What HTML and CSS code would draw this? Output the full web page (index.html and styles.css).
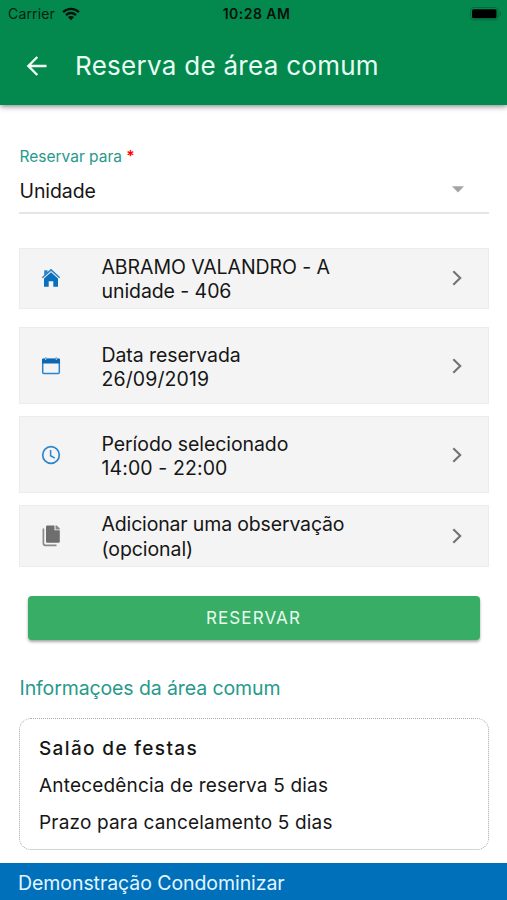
FILE: index.html
```html
<!DOCTYPE html>
<html lang="pt-BR">
<head>
<meta charset="utf-8">
<meta name="viewport" content="width=device-width, initial-scale=1">
<title>Reserva de área comum</title>
<link rel="stylesheet" href="styles.css">
</head>
<body>
<div class="app">
  <header class="header">
    <div class="status">
      <div class="status-left">
        <span class="carrier">Carrier</span>
        <svg class="wifi" width="18" height="14" viewBox="0 0 18 14" fill="none" stroke="#06120b" stroke-width="2.3">
          <path d="M1.1 5.1C5.6.7 12.4.7 16.9 5.1M4 8.1c2.9-2.8 7.1-2.8 10 0"/>
          <path d="M9 13.2 5.9 10.1c1.8-1.6 4.4-1.6 6.2 0z" fill="#06120b" stroke="none"/>
        </svg>
      </div>
      <span class="clock">10:28 AM</span>
      <div class="status-right">
        <svg width="32" height="14" viewBox="0 0 32 14">
          <rect x=".5" y=".5" width="27.5" height="12.5" rx="3" fill="none" stroke="#046b3b"/>
          <rect x="2" y="2.2" width="24.5" height="9" rx="1.5" fill="#000"/>
          <path d="M29.5 4.5c2 .8 2 4 0 4.800z" fill="#046b3b"/>
        </svg>
      </div>
    </div>
    <div class="toolbar">
      <svg class="back" width="22" height="22" viewBox="0 0 22 22" fill="none" stroke="#f1fff7" stroke-width="2.4">
        <path d="M20.500 11H3M11.300 2 2.400 11l8.900 9"/>
      </svg>
      <h1 class="title">Reserva de área comum</h1>
    </div>
  </header>

  <main class="content">
    <div class="field">
      <label class="label">Reservar para <span class="required">*</span></label>
      <div class="select">
        <span class="value">Unidade</span>
        <svg class="caret" width="12" height="7" viewBox="0 0 12 7"><path d="M0 .3h12L6 6.500z"/></svg>
      </div>
    </div>

    <div class="row row-home">
      <svg class="icon" width="20" height="20" viewBox="0 0 20 20">
        <path d="M10 .8 6.500 4V2.200H3.200v4.800L.8 9.200l1 1.100L10 3l8.200 7.300 1-1.100z" fill="#2b82c6"/>
        <path d="m10 4.300 7 6.200v8.200h-4.700v-5.400H7.700v5.400H3v-8.200z" fill="#0a6fbd"/>
      </svg>
      <div class="text"><div>ABRAMO VALANDRO - A</div><div>unidade - 406</div></div>
      <svg class="chevron" width="10" height="16" viewBox="0 0 10 16"><path d="m1.300 1.300 6.900 6.700-6.900 6.700"/></svg>
    </div>

    <div class="row row-date">
      <svg class="icon" width="20" height="20" viewBox="0 0 20 20">
        <rect x="1.700" y="3.500" width="16.600" height="14" rx="1" fill="none" stroke="#2785cc" stroke-width="1.500"/>
        <path d="M1 3.500Q1 2.500 2 2.500H4V1.500h1.300v1h9.400v-1H16v1h2q1 0 1 1V7.500H1z" fill="#0c67b2"/>
        <path d="M4 1.500h1.300V4H4zM14.700 1.500H16V4h-1.300z" fill="#8fbee2"/>
      </svg>
      <div class="text"><div>Data reservada</div><div class="digits">26/09/2019</div></div>
      <svg class="chevron" width="10" height="16" viewBox="0 0 10 16"><path d="m1.300 1.300 6.900 6.700-6.900 6.700"/></svg>
    </div>

    <div class="row row-period">
      <svg class="icon" width="20" height="20" viewBox="0 0 20 20" fill="none" stroke="#2b87ca" stroke-width="1.700">
        <circle cx="10" cy="10" r="8.300"/>
        <path d="M9.600 5v5.700l4.200 2.500" stroke-width="1.500"/>
      </svg>
      <div class="text"><div>Período selecionado</div><div class="digits">14:00 - 22:00</div></div>
      <svg class="chevron" width="10" height="16" viewBox="0 0 10 16"><path d="m1.300 1.300 6.900 6.700-6.900 6.700"/></svg>
    </div>

    <div class="row row-note">
      <svg class="icon" width="20" height="22" viewBox="0 0 20 22">
        <path d="M2.400 3.500v14.800q0 2 2 2H15.500" fill="none" stroke="#8a8a8a" stroke-width="1.700"/>
        <path d="M6.200.6h7.300v4.700h5.300v11.300q0 1.200-1.200 1.200H6.200Q5 17.800 5 16.600V1.800Q5 .6 6.200.6z" fill="#6e6e6e"/>
        <path d="M14.500.6h1.300l3 3v.9h-4.300z" fill="#888"/>
      </svg>
      <div class="text"><div class="tight">Adicionar uma observação</div><div>(opcional)</div></div>
      <svg class="chevron" width="10" height="16" viewBox="0 0 10 16"><path d="m1.300 1.300 6.900 6.700-6.900 6.700"/></svg>
    </div>

    <button class="button">RESERVAR</button>

    <h2 class="section">Informaçoes da área comum</h2>
    <section class="card">
      <h3 class="card-title">Salão de festas</h3>
      <p class="card-line">Antecedência de reserva 5 dias</p>
      <p class="card-line">Prazo para cancelamento 5 dias</p>
    </section>
  </main>

  <footer class="footer">Demonstração Condominizar</footer>
</div>
</body>
</html>
```
FILE: styles.css
```css
* { box-sizing: border-box; }
body { margin: 0; background: #fff; font-family: Inter, "Liberation Sans", sans-serif; color: #161616; }
.app { width: 507px; height: 900px; display: flex; flex-direction: column; overflow: hidden; }
.header { height: 105px; flex: none; background: #03894e; box-shadow: 0 1px 6px rgba(0,0,0,.55); }
.status { height: 28px; display: grid; grid-template-columns: 1fr auto 1fr; align-items: center; padding: 0 5px 0 8px; color: #06120b; }
.status-left { display: flex; align-items: center; gap: 7px; }
.carrier { font-size: 14px; line-height: 28px; letter-spacing: .15px; color: #05210f; }
.clock { font-size: 14px; font-weight: 600; line-height: 28px; letter-spacing: .45px; padding-left: 3px; }
.status-right { display: flex; justify-content: flex-end; }
.toolbar { height: 75px; display: flex; align-items: center; padding-left: 26px; }
.title { margin: 0 0 0 27px; font-size: 26px; font-weight: 400; line-height: 32px; letter-spacing: .28px; color: #e9fdf3; }
.content { flex: 1; display: flex; flex-direction: column; padding: 42px 18px 0 19px; }
.field { flex: none; height: 67px; border-bottom: 2px solid #e5e5e5; }
.label { display: block; font-size: 15.500px; line-height: 20px; padding-left: .5px; color: #27998b; }
.required { color: #f00; font-weight: 600; }
.select { display: flex; align-items: center; justify-content: space-between; padding: 0 25px 0 .5px; margin-top: 11px; }
.value { font-size: 19.500px; line-height: 26px; letter-spacing: -.08px; }
.caret { fill: #a3a3a3; margin-bottom: 4px; }
.row { flex: none; display: flex; align-items: center; background: #f4f4f4; border: 1px solid #ececec; padding: 0 26px 0 21px; }
.row-home { height: 61px; margin-top: 34px; padding-bottom: 1px; }
.row-date { height: 77px; margin-top: 18px; }
.row-period { height: 77px; margin-top: 12px; }
.row-note { height: 62px; margin-top: 12px; }
.icon { flex: none; }
.text { flex: 1; margin-left: 40.500px; padding-top: 2px; font-size: 19.500px; line-height: 24.400px; letter-spacing: -.08px; }
.digits { letter-spacing: .1px; }
.tight { letter-spacing: -.16px; }
.row-date .text, .row-period .text { padding-top: 3px; }
.row-note .text { padding-top: 1px; }
.chevron { flex: none; fill: none; stroke: #737373; stroke-width: 2.100; }
.button { flex: none; height: 44px; margin: 29px 9px 0; border: 0; border-radius: 4px; background: #38ad66; box-shadow: 0 2px 3px rgba(0,0,0,.35); color: #e7fbee; font: 400 17px/44px Inter, sans-serif; letter-spacing: 1.100px; padding: 0 1px 0 0; }
.section { margin: 35px 0 0; padding-left: .5px; font-size: 19.500px; font-weight: 400; line-height: 26px; letter-spacing: -.11px; color: #26998b; }
.card { flex: none; height: 132px; margin-top: 17px; border: 1px dotted #aaa; border-radius: 12px; padding: 11px 19px; }
.card-title { margin: 0; font-size: 19px; font-weight: 500; line-height: 37px; letter-spacing: 1.350px; }
.card-line { margin: 0; font-size: 19px; line-height: 37px; letter-spacing: .18px; }
.footer { flex: none; height: 37px; background: #0070bb; color: #e3f6ff; font-size: 19.500px; line-height: 41px; letter-spacing: -.07px; padding-left: 18px; }
```
